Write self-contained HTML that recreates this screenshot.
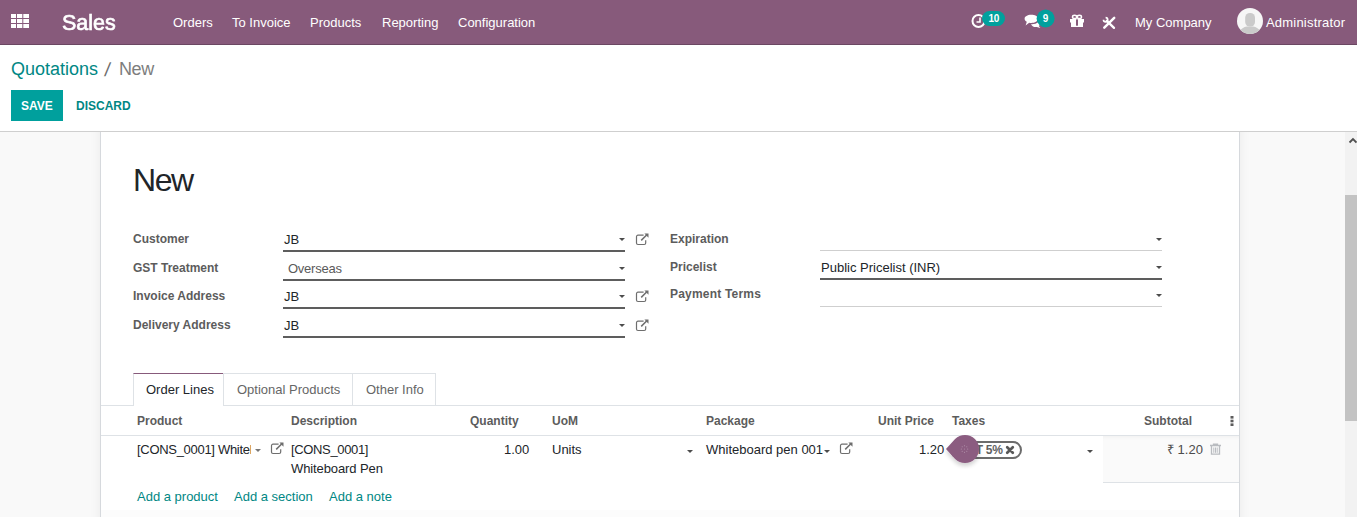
<!DOCTYPE html>
<html><head><meta charset="utf-8">
<style>
*{margin:0;padding:0;box-sizing:border-box}
html,body{width:1357px;height:517px;overflow:hidden;background:#fff;font-family:"Liberation Sans",sans-serif;}
.a{position:absolute}
.t{position:absolute;white-space:nowrap;line-height:1}
#nav{position:absolute;left:0;top:0;width:1357px;height:45px;background:#875A7B;border-bottom:1px solid #6b4762}
.nw{color:#fff;font-size:13px}
.lbl{font-size:12px;font-weight:700;color:#5c5c5c}
.val{font-size:13px;color:#212529}
.uline{position:absolute;height:2px;background:#5d5d5d}
.uline1{position:absolute;height:1px;background:#cfcfcf}
.caret{position:absolute;width:0;height:0;border-left:3px solid transparent;border-right:3px solid transparent;border-top:3px solid #4c4c4c}
.hd{font-size:12px;font-weight:700;color:#5c5c5c}
.lnk{font-size:13px;color:#008784}
</style></head><body>
<div id="nav"></div>
<!-- apps icon -->
<svg class="a" style="left:0;top:0" width="40" height="40" viewBox="0 0 40 40">
<g fill="#fff">
<rect x="11" y="14" width="5" height="4"/><rect x="17" y="14" width="5.3" height="4"/><rect x="23.3" y="14" width="5.7" height="4"/>
<rect x="11" y="19" width="5" height="4"/><rect x="17" y="19" width="5.3" height="4"/><rect x="23.3" y="19" width="5.7" height="4"/>
<rect x="11" y="24" width="5" height="4"/><rect x="17" y="24" width="5.3" height="4"/><rect x="23.3" y="24" width="5.7" height="4"/>
</g></svg>
<div class="t" style="left:62px;top:12px;font-size:22.5px;font-weight:400;color:#fff;-webkit-text-stroke:0.7px #fff;transform:scaleX(0.955);transform-origin:0 0">Sales</div>
<div class="t nw" style="left:173px;top:16px">Orders</div>
<div class="t nw" style="left:232px;top:16px">To Invoice</div>
<div class="t nw" style="left:310px;top:16px">Products</div>
<div class="t nw" style="left:382px;top:16px">Reporting</div>
<div class="t nw" style="left:458px;top:16px">Configuration</div>

<!-- right icons -->
<svg class="a" style="left:966px;top:8px" width="100" height="28" viewBox="966 8 100 28">
 <circle cx="978.5" cy="21" r="6" fill="none" stroke="#fff" stroke-width="2"/>
 <path d="M980 17.5 V22 H976.5" fill="none" stroke="#fff" stroke-width="1.6"/>
 <rect x="982" y="11" width="23" height="15" rx="7.5" fill="#00A09D"/>
 <path d="M1031.2 14.8 c-3.8 0 -6.6 1.7 -6.6 3.9 c0 1.3 .9 2.4 2.2 3.1 l-1.2 3.6 l3.6 -2.7 c.6 .1 1.3 .2 2 .2 c3.8 0 6.6 -1.8 6.6 -4.2 s-2.8 -3.9 -6.6 -3.9z" fill="#fff"/>
 <path d="M1031 24.2 c2.5 .3 5.5 -.5 7.2 -2.2 l2 1.5 c0 1 -.6 1.8 -1.4 2.4 l1.6 2.2 l-3.6 -1.2 c-1.8 .3 -4.6 .1 -5.8 -2.7z" fill="#fff"/>
 <circle cx="1045.6" cy="18.5" r="9" fill="#00A09D"/>
</svg>
<div class="t" style="left:988.5px;top:14px;font-size:10px;font-weight:700;color:#fff;letter-spacing:-0.3px">10</div>
<div class="t" style="left:1042.8px;top:14px;font-size:10px;font-weight:700;color:#fff">9</div>
<!-- gift -->
<svg class="a" style="left:1068px;top:13px" width="18" height="16" viewBox="1068 13 18 16">
 <ellipse cx="1074.6" cy="16.9" rx="2.1" ry="1.7" fill="none" stroke="#fff" stroke-width="1.5"/>
 <ellipse cx="1079.4" cy="16.9" rx="2.1" ry="1.7" fill="none" stroke="#fff" stroke-width="1.5"/>
 <path d="M1070 19 H1084 V22.6 H1083 V27 H1071 V22.6 H1070 Z" fill="#fff"/>
 <rect x="1076" y="19.4" width="2" height="6.3" fill="#875A7B"/>
</svg>
<!-- tools -->
<svg class="a" style="left:1100px;top:14px" width="18" height="17" viewBox="1100 14 18 17">
 <path d="M1104.3 27.6 L1114.2 17.8" stroke="#fff" stroke-width="2.5" stroke-linecap="round"/>
 <path d="M1106.8 20.9 L1114 27.9" stroke="#fff" stroke-width="2.3" stroke-linecap="round"/>
 <path d="M1105.6 17.6 A2.1 2.1 0 1 1 1103.5 19.7" fill="none" stroke="#fff" stroke-width="1.7"/>
</svg>
<div class="t nw" style="left:1135px;top:16px">My Company</div>
<svg class="a" style="left:1237px;top:8px" width="26" height="26" viewBox="0 0 26 26">
 <defs><clipPath id="av"><circle cx="13" cy="13" r="13"/></clipPath></defs>
 <circle cx="13" cy="13" r="13" fill="#f6f6f6"/>
 <g clip-path="url(#av)" fill="#cacaca">
  <rect x="8.2" y="5" width="9.8" height="13.5" rx="4.6"/>
  <path d="M2 26 C3 20.5 7 19 10 18.5 h6 c3 .5 7 2 8 7.5z"/>
 </g>
</svg>
<div class="t nw" style="left:1266px;top:16px;letter-spacing:0.2px">Administrator</div>

<!-- control panel -->
<div class="t" style="left:11px;top:60px;font-size:18px;color:#008784">Quotations</div>
<div class="t" style="left:105px;top:60px;font-size:19px;color:#6c6c6c;transform:skewX(-8deg)">/</div>
<div class="t" style="left:119px;top:60px;font-size:18px;color:#7d7d7d;letter-spacing:-0.4px">New</div>
<div class="a" style="left:11px;top:90px;width:52px;height:31px;background:#00A09D"></div>
<div class="t" style="left:21px;top:100px;font-size:12px;font-weight:700;color:#fff">SAVE</div>
<div class="t" style="left:76px;top:100px;font-size:12px;font-weight:700;color:#008784">DISCARD</div>
<div class="a" style="left:0;top:131px;width:1357px;height:1px;background:#cfcfcf"></div>

<!-- content bg -->
<div class="a" style="left:0;top:132px;width:1357px;height:385px;background:#f9f9f9;overflow:hidden">
<div class="a" style="left:100px;top:-20px;width:1140px;height:420px;background:#fff;border-left:1px solid #d6d9dd;border-right:1px solid #d6d9dd;box-shadow:0 0 12px rgba(0,0,0,.06)"></div></div>

<!-- sheet title -->
<div class="t" style="left:133px;top:164px;font-size:32px;color:#212529;letter-spacing:-1.4px">New</div>
<!-- left group -->
<div class="t lbl" style="left:133px;top:233px">Customer</div>
<div class="t lbl" style="left:133px;top:262px">GST Treatment</div>
<div class="t lbl" style="left:133px;top:290px">Invoice Address</div>
<div class="t lbl" style="left:133px;top:319px">Delivery Address</div>
<div class="t val" style="left:284px;top:233px">JB</div>
<div class="t val" style="left:288px;top:262px;color:#5a5a5a;letter-spacing:-0.25px">Overseas</div>
<div class="t val" style="left:284px;top:290px">JB</div>
<div class="t val" style="left:284px;top:319px">JB</div>
<div class="uline" style="left:283px;top:250px;width:342px"></div>
<div class="uline" style="left:283px;top:279px;width:342px"></div>
<div class="uline" style="left:283px;top:307px;width:342px"></div>
<div class="uline" style="left:283px;top:336px;width:342px"></div>
<div class="caret" style="left:619px;top:238px"></div>
<div class="caret" style="left:619px;top:267px"></div>
<div class="caret" style="left:619px;top:295px"></div>
<div class="caret" style="left:619px;top:324px"></div>
<!-- right group -->
<div class="t lbl" style="left:670px;top:233px">Expiration</div>
<div class="t lbl" style="left:670px;top:261px">Pricelist</div>
<div class="t lbl" style="left:670px;top:288px;letter-spacing:0.2px">Payment Terms</div>
<div class="t val" style="left:821px;top:261px">Public Pricelist (INR)</div>
<div class="uline1" style="left:820px;top:250px;width:342px"></div>
<div class="uline" style="left:820px;top:278px;width:342px"></div>
<div class="uline1" style="left:820px;top:306px;width:342px"></div>
<div class="caret" style="left:1156px;top:238px"></div>
<div class="caret" style="left:1156px;top:266px"></div>
<div class="caret" style="left:1156px;top:294px"></div>
<svg class="a" style="left:635px;top:233px" width="15" height="13" viewBox="0 0 15 13"><path d="M8.6 2.2 H3 a1.5 1.5 0 0 0 -1.5 1.5 V10 a1.5 1.5 0 0 0 1.5 1.5 H9.2 a1.5 1.5 0 0 0 1.5 -1.5 V7.2" fill="none" stroke="#6e6e6e" stroke-width="1.2"/><path d="M6.2 7.4 L12.4 1.2" stroke="#6e6e6e" stroke-width="1.5"/><path d="M9.4 0.6 H13.5 V4.7z" fill="#6e6e6e"/></svg>
<svg class="a" style="left:635px;top:290px" width="15" height="13" viewBox="0 0 15 13"><path d="M8.6 2.2 H3 a1.5 1.5 0 0 0 -1.5 1.5 V10 a1.5 1.5 0 0 0 1.5 1.5 H9.2 a1.5 1.5 0 0 0 1.5 -1.5 V7.2" fill="none" stroke="#6e6e6e" stroke-width="1.2"/><path d="M6.2 7.4 L12.4 1.2" stroke="#6e6e6e" stroke-width="1.5"/><path d="M9.4 0.6 H13.5 V4.7z" fill="#6e6e6e"/></svg>
<svg class="a" style="left:635px;top:319px" width="15" height="13" viewBox="0 0 15 13"><path d="M8.6 2.2 H3 a1.5 1.5 0 0 0 -1.5 1.5 V10 a1.5 1.5 0 0 0 1.5 1.5 H9.2 a1.5 1.5 0 0 0 1.5 -1.5 V7.2" fill="none" stroke="#6e6e6e" stroke-width="1.2"/><path d="M6.2 7.4 L12.4 1.2" stroke="#6e6e6e" stroke-width="1.5"/><path d="M9.4 0.6 H13.5 V4.7z" fill="#6e6e6e"/></svg>
<svg class="a" style="left:270px;top:442px" width="15" height="13" viewBox="0 0 15 13"><path d="M8.6 2.2 H3 a1.5 1.5 0 0 0 -1.5 1.5 V10 a1.5 1.5 0 0 0 1.5 1.5 H9.2 a1.5 1.5 0 0 0 1.5 -1.5 V7.2" fill="none" stroke="#6e6e6e" stroke-width="1.2"/><path d="M6.2 7.4 L12.4 1.2" stroke="#6e6e6e" stroke-width="1.5"/><path d="M9.4 0.6 H13.5 V4.7z" fill="#6e6e6e"/></svg>
<svg class="a" style="left:839px;top:442px" width="15" height="13" viewBox="0 0 15 13"><path d="M8.6 2.2 H3 a1.5 1.5 0 0 0 -1.5 1.5 V10 a1.5 1.5 0 0 0 1.5 1.5 H9.2 a1.5 1.5 0 0 0 1.5 -1.5 V7.2" fill="none" stroke="#6e6e6e" stroke-width="1.2"/><path d="M6.2 7.4 L12.4 1.2" stroke="#6e6e6e" stroke-width="1.5"/><path d="M9.4 0.6 H13.5 V4.7z" fill="#6e6e6e"/></svg>

<!-- tabs -->
<div class="a" style="left:101px;top:405px;width:1138px;height:1px;background:#dee2e6"></div>
<div class="a" style="left:133px;top:373px;width:91px;height:33px;background:#fff;border:1px solid #dee2e6;border-top-color:#875A7B;border-bottom:none"></div>
<div class="a" style="left:223px;top:373px;width:130px;height:32px;border:1px solid #dee2e6;border-bottom:none"></div>
<div class="a" style="left:352px;top:373px;width:84px;height:32px;border:1px solid #dee2e6;border-bottom:none"></div>
<div class="t" style="left:146px;top:383px;font-size:13px;color:#212529">Order Lines</div>
<div class="t" style="left:237px;top:383px;font-size:13px;color:#666">Optional Products</div>
<div class="t" style="left:366px;top:383px;font-size:13px;color:#666">Other Info</div>
<!-- table header -->
<div class="t hd" style="left:137px;top:415px">Product</div>
<div class="t hd" style="left:291px;top:415px">Description</div>
<div class="t hd" style="left:470px;top:415px">Quantity</div>
<div class="t hd" style="left:552px;top:415px">UoM</div>
<div class="t hd" style="left:706px;top:415px">Package</div>
<div class="t hd" style="left:878px;top:415px">Unit Price</div>
<div class="t hd" style="left:952px;top:415px">Taxes</div>
<div class="t hd" style="left:1144px;top:415px">Subtotal</div>
<svg class="a" style="left:1229px;top:415px" width="6" height="12" viewBox="0 0 6 12"><g fill="#5c5c5c"><rect x="1.5" y="1" width="3" height="2.6"/><rect x="1.5" y="4.7" width="3" height="2.6"/><rect x="1.5" y="8.4" width="3" height="2.6"/></g></svg>
<div class="a" style="left:101px;top:435px;width:1138px;height:1px;background:#dee2e6"></div>
<!-- row -->
<div class="a" style="left:1103px;top:436px;width:136px;height:46px;background:#fafafa;box-shadow:inset 0 4px 4px -3px rgba(0,0,0,.045)"></div>
<div class="a" style="left:1103px;top:482px;width:136px;height:1px;background:#dee2e6"></div>
<div class="t val" style="left:137px;top:440px;line-height:19px;height:19px;width:114px;overflow:hidden;letter-spacing:-0.3px">[CONS_0001] Whiteboard Pen</div>
<div class="caret" style="left:255px;top:449px;border-top-color:#777"></div>
<div class="t val" style="left:291px;top:443px;letter-spacing:-0.35px">[CONS_0001]</div>
<div class="t val" style="left:291px;top:462px;letter-spacing:-0.1px">Whiteboard Pen</div>
<div class="t val" style="left:504px;top:443px">1.00</div>
<div class="t val" style="left:552px;top:443px">Units</div>
<div class="caret" style="left:687px;top:450px"></div>
<div class="t val" style="left:706px;top:443px">Whiteboard pen 001</div>
<div class="caret" style="left:824px;top:450px"></div>
<div class="t val" style="left:919px;top:443px">1.20</div>
<div class="caret" style="left:1087px;top:450px"></div>
<div class="t val" style="left:1167px;top:443px;color:#4c4c4c">&#8377; 1.20</div>
<div class="t lnk" style="left:137px;top:490px">Add a product</div>
<div class="t lnk" style="left:234px;top:490px">Add a section</div>
<div class="t lnk" style="left:329px;top:490px">Add a note</div>
<div class="a" style="left:101px;top:510px;width:1138px;height:7px;background:#fcfcfc"></div>

<!-- tax pill -->
<div class="a" style="left:950px;top:441px;width:72px;height:18px;border:2px solid #6c6c6c;border-radius:9px;background:#fff"></div>
<div class="t" style="left:959px;top:444px;font-size:12px;font-weight:700;color:#626262;letter-spacing:-0.3px">GST 5%</div>
<svg class="a" style="left:1005px;top:445px" width="10" height="10" viewBox="0 0 10 10"><path d="M2.2 2.2 L7.8 7.8 M7.8 2.2 L2.2 7.8" stroke="#585858" stroke-width="2.7" stroke-linecap="round"/></svg>
<!-- tour tip -->
<svg class="a" style="left:940px;top:430px" width="46" height="40" viewBox="940 430 46 40">
 <defs><filter id="sh" x="-30%" y="-30%" width="160%" height="180%"><feGaussianBlur in="SourceAlpha" stdDeviation="2"/><feOffset dy="3"/><feComponentTransfer><feFuncA type="linear" slope="0.18"/></feComponentTransfer><feMerge><feMergeNode/><feMergeNode in="SourceGraphic"/></feMerge></filter></defs>
 <path d="M946 449 L955.1 439.1 A14 14 0 1 1 955.1 458.9 Z" fill="#8b5c80" filter="url(#sh)"/>
 <circle cx="967.7" cy="449.0" r="0.55" fill="#fff" opacity="0.35"/><circle cx="966.8" cy="451.3" r="0.55" fill="#fff" opacity="0.35"/><circle cx="964.5" cy="452.2" r="0.55" fill="#fff" opacity="0.35"/><circle cx="962.2" cy="451.3" r="0.55" fill="#fff" opacity="0.35"/><circle cx="961.3" cy="449.0" r="0.55" fill="#fff" opacity="0.35"/><circle cx="962.2" cy="446.7" r="0.55" fill="#fff" opacity="0.35"/><circle cx="964.5" cy="445.8" r="0.55" fill="#fff" opacity="0.35"/><circle cx="966.8" cy="446.7" r="0.55" fill="#fff" opacity="0.35"/><circle cx="964.5" cy="449" r="0.6" fill="#fff" opacity="0.3"/>
</svg>
<!-- trash -->
<svg class="a" style="left:1209px;top:443px" width="13" height="13" viewBox="0 0 13 13">
 <path d="M1 2.5 H12 M4.5 2.5 V1.2 H8.5 V2.5" fill="none" stroke="#b9bcc0" stroke-width="1.3"/>
 <path d="M2.5 3 V11.2 H10.5 V3" fill="none" stroke="#b9bcc0" stroke-width="1.3"/>
 <path d="M4.8 4.5 V9.8 M6.5 4.5 V9.8 M8.2 4.5 V9.8" stroke="#b9bcc0" stroke-width="1"/>
</svg>
<!-- scrollbar -->
<div class="a" style="left:1345px;top:132px;width:12px;height:385px;background:#f2f2f2"></div>
<div class="a" style="left:1345px;top:195px;width:12px;height:226px;background:#c3c3c3"></div>
<svg class="a" style="left:1345px;top:134px" width="12" height="12" viewBox="0 0 12 12"><path d="M4.5 8.5 L8 5 L11.5 8.5" fill="none" stroke="#505050" stroke-width="1.8"/></svg>
</body></html>
